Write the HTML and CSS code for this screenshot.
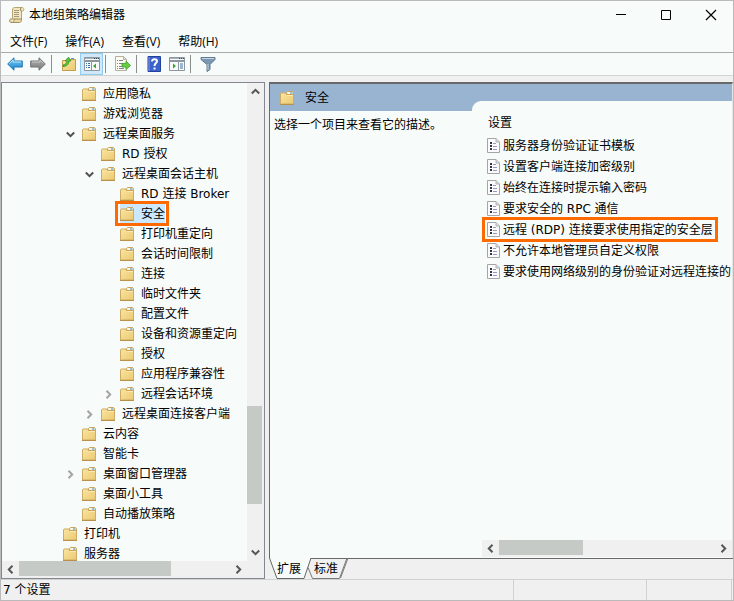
FILE: index.html
```html
<!DOCTYPE html>
<html lang="zh-CN">
<head>
  <meta charset="UTF-8">
  <meta name="viewport" content="width=device-width, initial-scale=1.0">
  <title>本地组策略编辑器</title>
  <link rel="stylesheet" href="styles.css">
</head>
<body>
  <!-- shared icons -->
  <svg class="defs" width="0" height="0" aria-hidden="true">
    <defs>
      <linearGradient id="folder-fill" x1="0" y1="0" x2="1" y2="1">
        <stop offset="0" stop-color="#fae5a2"/>
        <stop offset="1" stop-color="#ebc970"/>
      </linearGradient>
      <linearGradient id="blue-arrow" x1="0" y1="0" x2="0" y2="1">
        <stop offset="0" stop-color="#7fd0f5"/>
        <stop offset="1" stop-color="#1482cc"/>
      </linearGradient>
      <linearGradient id="gray-arrow" x1="0" y1="0" x2="0" y2="1">
        <stop offset="0" stop-color="#b0b0b0"/>
        <stop offset="1" stop-color="#7c7c7c"/>
      </linearGradient>
    </defs>
    <symbol id="folder" viewBox="0 0 15 14">
      <path d="M.5 13V2.500L1 2h5l1 1.500h6.500V13z" fill="url(#folder-fill)" stroke="#cfac66"/>
      <path d="M6.500 3.500v-2l1-1h5l1 1v2z" fill="#f6ecc9" stroke="#c9a45a"/>
      <path d="M8 2h2" stroke="#fff"/>
      <path d="M10 2h2.500" stroke="#3f97dc"/>
      <path d="M7 4.500h6" stroke="#fbeab0"/>
      <path d="M0 13.500h14" stroke="#b99148"/>
    </symbol>
    <symbol id="setting" viewBox="0 0 13 15">
      <path d="M.5.5h8.500L12.500 4v10.500H.5z" fill="#fbfbfd" stroke="#a3a5a6"/>
      <path d="M9 .5V4h3.500" fill="#d5d7d8" stroke="#b3b5b6"/>
      <path d="M3 4h2v2H3zM3 7h2v2H3zM3 10h2v2H3z" fill="#33343f"/>
      <path d="M6 5.500h3M6 8.500h4M6 11.500h4" stroke="#9a95bb"/>
    </symbol>
    <symbol id="down" viewBox="0 0 9 9">
      <path d="M.8 2.500L4.500 6.200 8.200 2.500" fill="none" stroke="currentColor" stroke-width="2"/>
    </symbol>
    <symbol id="right" viewBox="0 0 9 9">
      <path d="M2.500.8L6.200 4.500 2.500 8.200" fill="none" stroke="currentColor" stroke-width="2"/>
    </symbol>
    <symbol id="left" viewBox="0 0 9 9">
      <path d="M6.500.8L2.800 4.500 6.500 8.200" fill="none" stroke="currentColor" stroke-width="2"/>
    </symbol>
    <symbol id="up" viewBox="0 0 9 9">
      <path d="M.8 6.500L4.500 2.800 8.200 6.500" fill="none" stroke="currentColor" stroke-width="2"/>
    </symbol>
  </svg>

  <header class="titlebar">
    <svg class="app-icon" width="16" height="16" viewBox="0 0 16 16">
      <path d="M3.500 12V3c0-1.500.8-2.500 2-2.500h8c1.500 0 2 3.500 0 3.500H12.500v8.500z" fill="#f3e7c0" stroke="#b5a373"/>
      <path d="M12.500 4c-1.200 0-1.500-2-.5-3" fill="none" stroke="#8b7b53"/>
      <path d="M3.500 12H2c-2 0-2 3.500 0 3.500h8.500c1.500 0 2-1.500 2-3.500H5c.3 2-.3 3-1.500 3.200" fill="#ead9a3" stroke="#a08f62"/>
      <path d="M5 3.500h5M5 5.500h5M5 7.500h5M5 9.500h5" stroke="#a39a7c"/>
    </svg>
    <h1 class="title">本地组策略编辑器</h1>
    <div class="window-buttons">
      <button class="window-button" aria-label="最小化"><svg width="12" height="12" viewBox="0 0 12 12"><path d="M1 5.500h10" stroke="#000"/></svg></button>
      <button class="window-button" aria-label="最大化"><svg width="12" height="12" viewBox="0 0 12 12"><path d="M1.500 1.500h9v9h-9z" fill="none" stroke="#000"/></svg></button>
      <button class="window-button" aria-label="关闭"><svg width="12" height="12" viewBox="0 0 12 12"><path d="M1 1l10 10M11 1L1 11" stroke="#000" stroke-width="1.200"/></svg></button>
    </div>
  </header>

  <nav class="menubar">
    <button class="menu">文件(F)</button>
    <button class="menu">操作(A)</button>
    <button class="menu">查看(V)</button>
    <button class="menu">帮助(H)</button>
  </nav>

  <div class="toolbar">
    <button class="tool" aria-label="后退">
      <svg width="16" height="16" viewBox="0 0 16 16"><path d="M.7 8L7 1.800V5h8.300v6H7v3.200z" fill="url(#blue-arrow)" stroke="#2376b3"/><path d="M2.500 7.500L6 4v2h8" fill="none" stroke="#b5e6fb"/></svg>
    </button>
    <button class="tool" aria-label="前进">
      <svg width="16" height="16" viewBox="0 0 16 16"><path d="M15.300 8L9 1.800V5H.7v6H9v3.200z" fill="url(#gray-arrow)" stroke="#707070"/><path d="M2 6h8V4l3.500 3.500" fill="none" stroke="#c9c9c9"/></svg>
    </button>
    <span class="separator"></span>
    <button class="tool" aria-label="上一级">
      <svg width="16" height="16" viewBox="0 0 16 16"><path d="M1.500 14.500v-10h5L8 3.500h6.500v11z" fill="url(#folder-fill)" stroke="#c39c4e"/><path d="M10 2.500h3" stroke="#4a9bdc"/><path d="M2 10.500c3.500 0 6-2 6-5.500h2L7.500 1.200 4 5h2c0 2-1.500 3.500-4 4z" fill="#5cc63a" stroke="#2f9325" stroke-width=".8"/></svg>
    </button>
    <button class="tool tool-on" aria-label="显示/隐藏控制台树">
      <svg width="16" height="16" viewBox="0 0 16 16"><path d="M.5 1.500h15v13H.5z" fill="#f8f9fa" stroke="#8d959d"/><path d="M1 2.500h14" stroke="#a7b1bb"/><path d="M10 2.500h1M12 2.500h1M14 2.500h1" stroke="#3e4c58"/><path d="M1 5h14" stroke="#8d959d" stroke-width="2"/><path d="M7.500 6v8" stroke="#8d959d"/><path d="M2 7.500h1M2 9.500h1M2 11.500h1M4 7.500h2M4 9.500h2M4 11.500h2" stroke="#3973a8"/><path d="M12 7.500v5L9 10z" fill="#35a62e"/></svg>
    </button>
    <span class="separator"></span>
    <button class="tool" aria-label="导出列表">
      <svg width="16" height="16" viewBox="0 0 16 16"><path d="M.5.5h8L11.500 3.500v11H.5z" fill="#fdfaf0" stroke="#b5b09b"/><path d="M8.500.5v3h3" fill="none" stroke="#b5b09b"/><path d="M2 4.500h1M2 7.500h1M2 10.500h1M4 4.500h4M4 7.500h3M4 10.500h3M2 12.500h1M4 12.500h5" stroke="#857f91"/><path d="M7 7.500h4V5l4.500 4.500L11 13.500V11H7z" fill="#67cf3d" stroke="#3e9e2e" stroke-width=".8"/></svg>
    </button>
    <span class="separator"></span>
    <button class="tool" aria-label="帮助">
      <svg width="16" height="16" viewBox="0 0 16 16"><path d="M2 .5h12.500v15H2z" fill="#3a62cc" stroke="#23409b"/><path d="M3 1v14" stroke="#8298df"/><path d="M6 5.500c0-3 5-3 5-.3C11 7 8.500 7.200 8.500 10M8.500 11.500v2" fill="none" stroke="#fff" stroke-width="2"/></svg>
    </button>
    <button class="tool" aria-label="显示/隐藏操作窗格">
      <svg width="16" height="16" viewBox="0 0 16 16"><path d="M.5 1.500h15v13H.5z" fill="#f8f9fa" stroke="#8d959d"/><path d="M1 2.500h14" stroke="#a7b1bb"/><path d="M10 2.500h1M12 2.500h1M14 2.500h1" stroke="#3e4c58"/><path d="M1 5h14" stroke="#8d959d" stroke-width="2"/><path d="M9.500 6v8" stroke="#8d959d"/><path d="M11 8h3M11 10h3M11 12h3" stroke="#3973a8"/><path d="M4 7.500v5L7 10z" fill="#35a62e"/></svg>
    </button>
    <span class="separator"></span>
    <button class="tool" aria-label="筛选器">
      <svg width="16" height="16" viewBox="0 0 16 16"><path d="M1 1.500h14v2L10 8.500v5L7 15.500v-7L1 3.500z" fill="#7b98b2" stroke="#60798f"/><path d="M2 2.500h12" stroke="#c5d6e4"/><path d="M8 8v6" stroke="#c0d3e1"/></svg>
    </button>
  </div>

  <main class="console">
    <section class="tree-pane">
      <div class="tree-row">
        <ul class="tree">
          <li class="node level-2"><span class="expander"></span><svg class="folder"><use href="#folder"/></svg><span class="label">应用隐私</span></li>
          <li class="node level-2"><span class="expander"></span><svg class="folder"><use href="#folder"/></svg><span class="label">游戏浏览器</span></li>
          <li class="node level-2"><button class="expander open" aria-label="折叠"><svg><use href="#down"/></svg></button><svg class="folder"><use href="#folder"/></svg><span class="label">远程桌面服务</span></li>
          <li class="node level-3"><span class="expander"></span><svg class="folder"><use href="#folder"/></svg><span class="label">RD 授权</span></li>
          <li class="node level-3"><button class="expander open" aria-label="折叠"><svg><use href="#down"/></svg></button><svg class="folder"><use href="#folder"/></svg><span class="label">远程桌面会话主机</span></li>
          <li class="node level-4"><span class="expander"></span><svg class="folder"><use href="#folder"/></svg><span class="label">RD 连接 Broker</span></li>
          <li class="node level-4"><span class="expander"></span><span class="selected"><svg class="folder"><use href="#folder"/></svg><span class="label">安全</span></span></li>
          <li class="node level-4"><span class="expander"></span><svg class="folder"><use href="#folder"/></svg><span class="label">打印机重定向</span></li>
          <li class="node level-4"><span class="expander"></span><svg class="folder"><use href="#folder"/></svg><span class="label">会话时间限制</span></li>
          <li class="node level-4"><span class="expander"></span><svg class="folder"><use href="#folder"/></svg><span class="label">连接</span></li>
          <li class="node level-4"><span class="expander"></span><svg class="folder"><use href="#folder"/></svg><span class="label">临时文件夹</span></li>
          <li class="node level-4"><span class="expander"></span><svg class="folder"><use href="#folder"/></svg><span class="label">配置文件</span></li>
          <li class="node level-4"><span class="expander"></span><svg class="folder"><use href="#folder"/></svg><span class="label">设备和资源重定向</span></li>
          <li class="node level-4"><span class="expander"></span><svg class="folder"><use href="#folder"/></svg><span class="label">授权</span></li>
          <li class="node level-4"><span class="expander"></span><svg class="folder"><use href="#folder"/></svg><span class="label">应用程序兼容性</span></li>
          <li class="node level-4"><button class="expander" aria-label="展开"><svg><use href="#right"/></svg></button><svg class="folder"><use href="#folder"/></svg><span class="label">远程会话环境</span></li>
          <li class="node level-3"><button class="expander" aria-label="展开"><svg><use href="#right"/></svg></button><svg class="folder"><use href="#folder"/></svg><span class="label">远程桌面连接客户端</span></li>
          <li class="node level-2"><span class="expander"></span><svg class="folder"><use href="#folder"/></svg><span class="label">云内容</span></li>
          <li class="node level-2"><span class="expander"></span><svg class="folder"><use href="#folder"/></svg><span class="label">智能卡</span></li>
          <li class="node level-2"><button class="expander" aria-label="展开"><svg><use href="#right"/></svg></button><svg class="folder"><use href="#folder"/></svg><span class="label">桌面窗口管理器</span></li>
          <li class="node level-2"><span class="expander"></span><svg class="folder"><use href="#folder"/></svg><span class="label">桌面小工具</span></li>
          <li class="node level-2"><span class="expander"></span><svg class="folder"><use href="#folder"/></svg><span class="label">自动播放策略</span></li>
          <li class="node level-1"><span class="expander"></span><svg class="folder"><use href="#folder"/></svg><span class="label">打印机</span></li>
          <li class="node level-1"><span class="expander"></span><svg class="folder"><use href="#folder"/></svg><span class="label">服务器</span></li>
        </ul>
        <div class="scrollbar vertical tree-vertical">
          <button class="arrow" aria-label="向上滚动"><svg><use href="#up"/></svg></button>
          <div class="track"><div class="thumb"></div></div>
          <button class="arrow" aria-label="向下滚动"><svg><use href="#down"/></svg></button>
        </div>
      </div>
      <div class="scrollbar tree-horizontal">
        <button class="arrow" aria-label="向左滚动"><svg><use href="#left"/></svg></button>
        <div class="track"><div class="thumb"></div></div>
        <button class="arrow" aria-label="向右滚动"><svg><use href="#right"/></svg></button>
      </div>
    </section>

    <section class="detail-pane">
      <div class="detail">
        <div class="description">
          <h2 class="detail-title"><svg class="folder"><use href="#folder"/></svg>安全</h2>
          <p class="hint">选择一个项目来查看它的描述。</p>
        </div>
        <div class="settings">
          <h3 class="column-title">设置</h3>
          <ul class="setting-list">
            <li class="setting"><svg><use href="#setting"/></svg>服务器身份验证证书模板</li>
            <li class="setting"><svg><use href="#setting"/></svg>设置客户端连接加密级别</li>
            <li class="setting"><svg><use href="#setting"/></svg>始终在连接时提示输入密码</li>
            <li class="setting"><svg><use href="#setting"/></svg>要求安全的 RPC 通信</li>
            <li class="setting marked"><svg><use href="#setting"/></svg>远程 (RDP) 连接要求使用指定的安全层</li>
            <li class="setting"><svg><use href="#setting"/></svg>不允许本地管理员自定义权限</li>
            <li class="setting"><svg><use href="#setting"/></svg>要求使用网络级别的身份验证对远程连接的</li>
          </ul>
          <div class="scrollbar list-horizontal">
            <button class="arrow" aria-label="向左滚动"><svg><use href="#left"/></svg></button>
            <div class="track"><div class="thumb"></div></div>
            <button class="arrow" aria-label="向右滚动"><svg><use href="#right"/></svg></button>
          </div>
        </div>
      </div>
      <div class="tabs">
        <button class="tab tab-active"><svg class="tab-shape" width="42" height="21" viewBox="0 0 42 21"><path d="M0 0L8 20h27L42 0z" fill="#f7fbf9"/><path d="M.5 0L8 20.500h27L42 0" fill="none" stroke="#666"/></svg><span class="tab-label">扩展</span></button>
        <button class="tab"><svg class="tab-shape" width="42" height="21" viewBox="0 0 42 21"><path d="M2 9.500L6.500 20.500h27L41 0" fill="none" stroke="#777"/><path d="M34.500 20L42 0" stroke="#777"/></svg><span class="tab-label">标准</span></button>
        <span class="tab-rest"></span>
      </div>
    </section>
  </main>

  <footer class="statusbar">
    <span class="status status-text">7 个设置</span>
    <span class="status"></span>
    <span class="status status-small"></span>
  </footer>
</body>
</html>
```

FILE: styles.css
```css
* {
  box-sizing: border-box;
}
body {
  display: flex;
  flex-direction: column;
  height: 100vh;
  margin: 0;
  border: 1px solid #b9bab9;
  background: #f0f0f0;
  color: #000;
  font-family: "DejaVu Sans", "Noto Sans CJK SC", sans-serif;
  font-size: 12px;
  line-height: 20px;
  overflow: hidden;
  white-space: nowrap;
}
h1, h2, h3, p, ul {
  margin: 0;
  padding: 0;
  font-size: 12px;
  font-weight: normal;
  list-style: none;
}
button {
  margin: 0;
  padding: 0;
  border: 0;
  background: none;
  color: inherit;
  font: inherit;
}
svg {
  display: block;
  flex: none;
}
.defs {
  position: absolute;
}

/* title and menu */
.titlebar {
  display: flex;
  align-items: center;
  height: 27px;
  padding-left: 8px;
  background: #f7fbf9;
}
.title {
  flex: 1;
  padding-left: 4px;
}
.window-buttons {
  display: flex;
}
.window-button {
  display: flex;
  align-items: center;
  justify-content: center;
  width: 45px;
  height: 26px;
}
.menubar {
  display: flex;
  gap: 18px;
  height: 25px;
  padding: 3px 9px 0;
  border-bottom: 1px solid #a9aba9;
  background: #f7fbf9;
  font-family: "Open Sans", "Noto Sans CJK SC", sans-serif;
}

/* toolbar */
.toolbar {
  display: flex;
  align-items: center;
  height: 23px;
  padding-left: 2px;
  border-bottom: 1px solid #d2d4d2;
  background: #f7fbf9;
}
.tool {
  display: flex;
  align-items: center;
  justify-content: center;
  width: 23px;
  height: 22px;
}
.tool-on {
  border: 1px solid #93cbef;
  background: #cfe8fa;
}
.separator {
  width: 1px;
  height: 18px;
  margin: 0 5px 0 2px;
  background: #8c8e8c;
}

/* panes */
.console {
  display: flex;
  flex: 1;
  gap: 4px;
  min-height: 0;
  padding-top: 6px;
}
.tree-pane {
  display: flex;
  flex: 0 0 264px;
  flex-direction: column;
  border: 1px solid #828790;
}
.tree-row {
  display: flex;
  flex: 1;
  min-height: 0;
}
.tree {
  flex: 1;
  padding-top: 1px;
  background: #f7fbf9;
  overflow: hidden;
}
.node {
  display: flex;
  align-items: center;
  height: 20px;
}
.level-1 { padding-left: 41px; }
.level-2 { padding-left: 60px; }
.level-3 { padding-left: 79px; }
.level-4 { padding-left: 98px; }
.expander {
  display: flex;
  justify-content: center;
  width: 20px;
  padding-right: 4px;
  color: #a3a5a3;
}
.expander svg, .arrow svg {
  width: 9px;
  height: 9px;
}
.open {
  color: #505250;
}
.folder {
  width: 15px;
  height: 14px;
}
.label {
  padding-left: 6px;
}
.selected {
  position: relative;
  display: flex;
  align-items: center;
  background: #cce8ff;
}
.selected::after, .marked::after {
  content: "";
  position: absolute;
  border: 3px solid #ff6a00;
}
.selected::after {
  inset: -3px -4px -2px -5px;
}

/* scrollbars */
.scrollbar {
  display: flex;
  flex: none;
  height: 17px;
  background: #f0f0f0;
  color: #555755;
}
.arrow {
  display: flex;
  flex: none;
  align-items: center;
  justify-content: center;
  width: 17px;
  height: 17px;
}
.track {
  display: flex;
  flex: 1;
}
.track::before {
  content: "";
}
.thumb {
  height: 15px;
  background: #c6cac7;
}
.vertical {
  flex-direction: column;
  width: 17px;
  height: auto;
}
.vertical .track {
  flex-direction: column;
}
.vertical .thumb {
  width: 15px;
}
.tree-vertical .track::before {
  height: 69%;
}
.tree-vertical .thumb {
  height: 22%;
}
.tree-horizontal {
  padding-right: 17px;
}
.tree-horizontal .thumb {
  width: 72%;
}
.list-horizontal .thumb {
  width: 39%;
}

/* detail pane */
.detail-pane {
  display: flex;
  flex: 1;
  flex-direction: column;
  min-width: 0;
}
.detail {
  display: flex;
  flex: 1;
  min-height: 0;
  border: 1px solid #696969;
  border-width: 2px 1px 0 1px;
  border-right-color: #e3e5e3;
  background: #99b4d1;
}
.description {
  display: flex;
  flex: 0 0 202px;
  flex-direction: column;
}
.detail-title {
  display: flex;
  align-items: center;
  gap: 10px;
  height: 27px;
  padding-left: 10px;
}
.hint {
  flex: 1;
  padding: 4px;
  background: #f7fbf9;
}
.settings {
  display: flex;
  flex: 1;
  flex-direction: column;
  min-width: 0;
  margin-top: 17px;
  padding: 12px 0 1px 10px;
  border-top-left-radius: 9px;
  background: #f7fbf9;
}
.column-title {
  height: 22px;
  padding-left: 6px;
}
.setting-list {
  flex: 1;
  overflow: hidden;
}
.setting {
  position: relative;
  display: flex;
  align-items: center;
  gap: 3px;
  height: 21px;
  padding-left: 5px;
}
.setting svg {
  width: 13px;
  height: 15px;
}
.marked {
  width: max-content;
}
.marked::after {
  inset: -2px -5px -2px 0;
}

/* tabs */
.tabs {
  display: flex;
  flex: none;
  height: 21px;
}
.tab {
  position: relative;
  width: 37px;
  padding-left: 8px;
  text-align: left;
}
.tab-active {
  z-index: 1;
}
.tab-shape {
  position: absolute;
  top: 0;
  left: 0;
}
.tab-label {
  position: relative;
}
.tab:not(.tab-active)::before {
  content: "";
  position: absolute;
  top: 0;
  right: 0;
  left: 4px;
  height: 1px;
  background: #696969;
}
.tab-rest {
  flex: 1;
  border-top: 1px solid #696969;
}

/* status bar */
.statusbar {
  display: flex;
  flex: none;
  height: 21px;
  padding-right: 1px;
  border-top: 1px solid #d0d2d0;
}
.status {
  width: 133px;
  border-right: 1px solid #cfd1cf;
}
.status-text {
  flex: 1;
  padding-left: 2px;
}
.status-small {
  width: 85px;
}
```
